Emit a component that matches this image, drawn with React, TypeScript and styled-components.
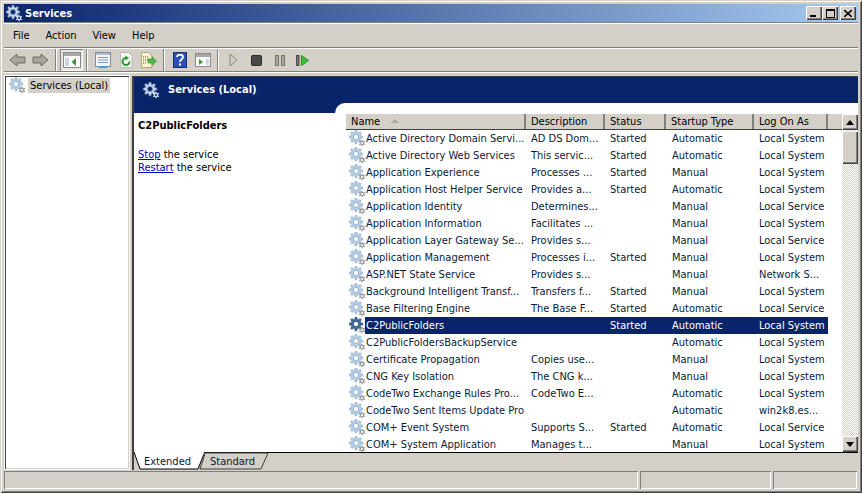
import React from "react";
import styled, { createGlobalStyle } from "styled-components";

const FONT_SIZE = "11px";

const Global = createGlobalStyle`
  html, body { margin: 0; padding: 0; background: #d4d0c8; overflow: hidden; }
  body { font-family: "DejaVu Sans Condensed", "DejaVu Sans", Arial, sans-serif; font-stretch: condensed; font-size: ${FONT_SIZE}; color: #000; }
  * { box-sizing: border-box; }
`;

const Frame = styled.div`
  width: 862px; height: 493px; padding: 4px; display: flex; flex-direction: column;
  background: #d4d0c8;
  box-shadow: inset 1px 1px 0 #d4d0c8, inset -1px -1px 0 #404040, inset 2px 2px 0 #fff, inset -2px -2px 0 #808080;
`;
const TitleBar = styled.div`
  height: 18px; display: flex; align-items: center; padding: 0 2px 0 2px; flex: none;
  background: linear-gradient(90deg, #0a246a, #a6caf0);
`;
const TitleText = styled.span`
  color: #fff; font-weight: 700; font-size: ${FONT_SIZE}; margin-left: 2px; flex: 1;
`;
const CaptionButton = styled.div<{ $gap?: boolean }>`
  width: 16px; height: 14px; background: #d4d0c8; display: flex; align-items: center; justify-content: center;
  margin-left: ${p => (p.$gap ? "2px" : "0")};
  box-shadow: inset 1px 1px 0 #fff, inset -1px -1px 0 #404040, inset -2px -2px 0 #808080;
`;
const MenuBar = styled.div`
  margin-top: 1px; height: 25px; display: flex; align-items: center; gap: 16px; padding: 0 0 1px 9px; flex: none;
  border-top: 1px solid #fff; border-bottom: 1px solid #808080;
  box-shadow: 0 -1px 0 #808080;
`;
const MenuItem = styled.span` color: #000; `;
const ToolBar = styled.div`
  height: 24px; display: flex; align-items: center; padding-left: 2px; flex: none;
  border-top: 1px solid #fff; border-bottom: 1px solid #808080;
`;
const ToolButton = styled.div<{ $active?: boolean }>`
  width: 23px; height: 22px; display: flex; align-items: center; justify-content: center; flex: none;
  ${p => p.$active ? `
    background: repeating-conic-gradient(#d4d0c8 0 25%, #fff 0 50%) 0 0/2px 2px;
    box-shadow: inset 1px 1px 0 #808080, inset -1px -1px 0 #fff;
  ` : ""}
`;
const ToolSep = styled.div`
  width: 8px; height: 22px; flex: none;
  display: flex; justify-content: center;
  &::after { content: ""; width: 2px; height: 100%; background: linear-gradient(90deg, #808080 50%, #fff 50%); }
`;
const Content = styled.div`
  flex: 1; min-height: 0; display: flex; gap: 3px; padding-top: 3px;
  border-top: 1px solid #fff; margin-bottom: 1px;
`;
const TreePane = styled.div`
  width: 124px; background: #fff; padding: 1px;
  box-shadow: inset 1px 1px 0 #404040, inset -1px -1px 0 #d4d0c8, 0 0 0 1px #fff;
  margin: 0 0 1px 1px;
`;
const TreeRow = styled.div` display: flex; align-items: center; height: 17px; padding-left: 3px; `;
const TreeLabel = styled.span`
  margin-left: 2px; background: #d4d0c8; padding: 0 2px; height: 15px; line-height: 15px; color: #000;
`;
const MainPane = styled.div`
  flex: 1; min-width: 0; display: flex; flex-direction: column; background: #fff;
  border-top: 1px solid #404040; border-left: 2px solid #404040;
`;
const BlueHeader = styled.div`
  height: 26px; flex: none; background: #0a246a; display: flex; align-items: center; padding-left: 9px;
`;
const BlueTitle = styled.span`
  color: #fff; font-weight: 700; margin-left: 8px; margin-top: -2px;
`;
const Body = styled.div` flex: 1; min-height: 0; display: flex; background: #0a246a; `;
const DescPane = styled.div`
  width: 201px; margin-top: 10px; background: #fff; padding: 5px 0 0 4px; flex: none;
  display: flex; flex-direction: column;
`;
const DescTitle = styled.div` font-weight: 700; line-height: 15px; margin-bottom: 15px; `;
const DescLine = styled.div` line-height: 13px; `;
const DescLink = styled.span` color: #0000c8; text-decoration: underline; `;
const ListPane = styled.div`
  flex: 1; min-width: 0; background: #fff; border-top-left-radius: 10px;
  display: flex; flex-direction: column; padding: 11px 0 0 11px;
`;
const ListArea = styled.div` flex: 1; min-height: 0; display: flex; `;
const Table = styled.div` flex: 1; min-width: 0; display: flex; flex-direction: column; overflow: hidden; `;
const cols = "180px 79px 61px 88px 74px";
const HeaderRow = styled.div`
  display: grid; grid-template-columns: ${cols} 1fr; height: 16px; flex: none; background: #d4d0c8;
  border-bottom: 1px solid #404040;
`;
const HeaderCell = styled.div`
  padding-left: 5px; line-height: 15px; border-right: 2px solid #808080; white-space: nowrap;
  display: flex; align-items: center; gap: 11px;
`;
const HeaderFill = styled.div``;
const SortMark = styled.span`
  width: 0; height: 0; border-left: 4px solid transparent; border-right: 4px solid transparent;
  border-bottom: 4px solid #aca899; margin-top: -2px;
`;
const Rows = styled.div` flex: 1; overflow: hidden; `;
const Row = styled.div`
  display: grid; grid-template-columns: ${cols}; width: 482px; height: 17px; align-items: center; color: #0a1a3a;
`;
const NameCell = styled.div`
  display: flex; align-items: center; padding-left: 3px; white-space: nowrap; height: 17px;
`;
const NameText = styled.span` margin-left: 0; padding-left: 0; `;
const Cell = styled.div<{ $indent: number }>`
  padding-left: ${p => p.$indent}px; white-space: nowrap; line-height: 17px; height: 17px;
`;
const SelectedRow = styled(Row)`
  color: #fff;
  background: linear-gradient(90deg, #fff 19px, #0a246a 19px);
`;
const ScrollBar = styled.div`
  width: 16px; flex: none; display: flex; flex-direction: column;
  background: repeating-conic-gradient(#d4d0c8 0 25%, #fff 0 50%) 0 0/2px 2px;
`;
const ScrollBtn = styled.div`
  width: 16px; height: 16px; flex: none; background: #d4d0c8; display: flex; align-items: center; justify-content: center;
  box-shadow: inset 1px 1px 0 #fff, inset -1px -1px 0 #404040, inset -2px -2px 0 #808080;
`;
const ScrollThumb = styled(ScrollBtn)` height: 33px; margin-top: 1px; `;
const ScrollTrack = styled.div` flex: 1; `;
const TabStrip = styled.div`
  height: 18px; flex: none; background: #d4d0c8;
  position: relative; border-top: 1px solid #000;
`;
const TabsSvg = styled.svg` position: absolute; left: 0; top: -1px; `;
const TabLabel = styled.span<{ $left: number }>`
  position: absolute; left: ${p => p.$left}px; top: 1px; color: #0a1a3a; line-height: 15px;
`;
const StatusBar = styled.div`
  height: 18px; flex: none; display: flex; gap: 2px; padding: 0 1px 0 0;
`;
const StatusCell = styled.div<{ $w?: number }>`
  ${p => (p.$w ? `width: ${p.$w}px; flex: none;` : "flex: 1;")}
  height: 18px;
  box-shadow: inset 1px 1px 0 #808080, inset -1px -1px 0 #fff;
`;

function gearPath(cx: number, cy: number, ro: number, ri: number, teeth: number) {
  const pts: string[] = [];
  const step = (Math.PI * 2) / teeth;
  for (let i = 0; i < teeth; i++) {
    const a = i * step - Math.PI / 2;
    const seq: [number, number][] = [
      [a - step * 0.3, ri], [a - step * 0.17, ro], [a + step * 0.17, ro], [a + step * 0.3, ri],
    ];
    for (const [an, r] of seq) pts.push(`${(cx + Math.cos(an) * r).toFixed(2)} ${(cy + Math.sin(an) * r).toFixed(2)}`);
  }
  return "M" + pts.join("L") + "Z";
}

const Gear: React.FC<{ tone?: "pale" | "dark" | "white" }> = ({ tone = "pale" }) => {
  const main = tone === "pale" ? "#b4cde3" : tone === "dark" ? "#3f6a98" : "#c6d6ea";
  const edge = tone === "pale" ? "#8aa8c6" : tone === "dark" ? "#2b4a78" : "#7f9dc0";
  const hub = tone === "white" ? "#0a246a" : "#fff";
  const small = tone === "white" ? "#c6d6ea" : "#a0a0a0";
  return (
    <svg width="17" height="17" viewBox="0 0 17 17" style={{ flex: "none" }}>
      <path d={gearPath(7, 7, 6.8, 5, 8)} fill={main} stroke={edge} strokeWidth="0.6" />
      <circle cx="7" cy="7" r="2.6" fill={hub} stroke={edge} strokeWidth="0.8" />
      <path d={gearPath(13, 13, 3.4, 2.3, 6)} fill={small} />
      <circle cx="13" cy="13" r="1" fill={hub} />
    </svg>
  );
};

const Arrow: React.FC<{ dir: "l" | "r" }> = ({ dir }) => (
  <svg width="17" height="14" viewBox="0 0 17 14">
    <path
      d={dir === "l" ? "M1 7 L8 1 V4 H16 V10 H8 V13 Z" : "M16 7 L9 1 V4 H1 V10 H9 V13 Z"}
      fill="#a8a59d" stroke="#6e6c66" strokeWidth="1"
    />
  </svg>
);

const IconTree = () => (
  <svg width="18" height="16" viewBox="0 0 18 16">
    <rect x="0.5" y="0.5" width="17" height="15" fill="#fff" stroke="#8a8a8a" />
    <rect x="1" y="1" width="16" height="3" fill="#a8a8a8" />
    <rect x="2" y="6" width="4" height="8" fill="#c9d5e2" />
    <path d="M13 6 L8.5 10 L13 14 Z" fill="#2f9a3a" />
  </svg>
);
const IconProps = () => (
  <svg width="16" height="16" viewBox="0 0 16 16">
    <rect x="0.5" y="0.5" width="15" height="14" fill="#f4f6fa" stroke="#7f8ea3" />
    <rect x="1" y="1" width="14" height="2" fill="#b4bdcc" />
    <path d="M3 5.5H13M3 8H13M3 10.5H13" stroke="#7f96b4" />
    <rect x="4" y="14" width="8" height="2" fill="#3ea0e0" />
  </svg>
);
const IconRefresh = () => (
  <svg width="14" height="16" viewBox="0 0 14 16">
    <path d="M1.5 .5H9.5L13 4V15.5H1.5Z" fill="#f7f7ef" stroke="#bbb" />
    <path d="M10.5 9.5A3.5 3.5 0 1 1 7 6" fill="none" stroke="#2f9a3a" strokeWidth="2" />
    <path d="M6.5 3.5 L10 6 L6.5 8.5Z" fill="#2f9a3a" />
  </svg>
);
const IconExport = () => (
  <svg width="17" height="16" viewBox="0 0 17 16">
    <path d="M1.5 .5H8.5L12 4V15.5H1.5Z" fill="#fbf3cf" stroke="#b8aa76" />
    <path d="M3 5H8M3 8H8M3 11H7" stroke="#444" strokeDasharray="1 1" />
    <path d="M8 7H12V4.5L16.5 9 12 13.5V11H8Z" fill="#50b548" stroke="#2d8a2c" strokeWidth=".6" />
  </svg>
);
const IconHelp = () => (
  <svg width="14" height="16" viewBox="0 0 14 16">
    <rect x=".5" y=".5" width="13" height="15" fill="#2c4fb8" stroke="#1a2c78" />
    <path d="M4 5 C4 2 10 2 10 5 C10 7.4 7 7 7 10" fill="none" stroke="#fff" strokeWidth="1.8" />
    <rect x="6" y="11.5" width="2" height="2" fill="#fff" />
  </svg>
);
const IconAction = () => (
  <svg width="16" height="14" viewBox="0 0 16 14">
    <rect x=".5" y=".5" width="15" height="13" fill="#fff" stroke="#8a8a8a" />
    <rect x="1" y="1" width="14" height="3" fill="#a8a8a8" />
    <path d="M4 6 L8 9 L4 12 Z" fill="#2f9a3a" />
    <rect x="11" y="6" width="3" height="6" fill="#c9d5e2" />
  </svg>
);
const IconPlay = () => (
  <svg width="9" height="14" viewBox="0 0 9 14">
    <path d="M1 1 L8 7 L1 13 Z" fill="#cfccc4" stroke="#8a8a84" />
  </svg>
);
const IconStop = () => (
  <svg width="11" height="11" viewBox="0 0 11 11">
    <rect x=".5" y=".5" width="10" height="10" rx="1" fill="#4a4a4a" stroke="#2a2a2a" />
  </svg>
);
const IconPause = () => (
  <svg width="10" height="11" viewBox="0 0 10 11">
    <rect x=".5" y=".5" width="3" height="10" fill="#a8a8a2" stroke="#77776f" />
    <rect x="6.5" y=".5" width="3" height="10" fill="#a8a8a2" stroke="#77776f" />
  </svg>
);
const IconResume = () => (
  <svg width="13" height="11" viewBox="0 0 13 11">
    <rect x=".5" y=".5" width="2.5" height="10" fill="#77776f" stroke="#4f4f49" />
    <path d="M5.5 .5 L12.5 5.5 L5.5 10.5 Z" fill="#3dc23d" stroke="#1f8f1f" />
  </svg>
);

type Svc = [string, string, string, string, string];
const services: Svc[] = [
  ["Active Directory Domain Servi...", "AD DS Dom...", "Started", "Automatic", "Local System"],
  ["Active Directory Web Services", "This servic...", "Started", "Automatic", "Local System"],
  ["Application Experience", "Processes ...", "Started", "Manual", "Local System"],
  ["Application Host Helper Service", "Provides a...", "Started", "Automatic", "Local System"],
  ["Application Identity", "Determines...", "", "Manual", "Local Service"],
  ["Application Information", "Facilitates ...", "", "Manual", "Local System"],
  ["Application Layer Gateway Se...", "Provides s...", "", "Manual", "Local Service"],
  ["Application Management", "Processes i...", "Started", "Manual", "Local System"],
  ["ASP.NET State Service", "Provides s...", "", "Manual", "Network S..."],
  ["Background Intelligent Transf...", "Transfers f...", "Started", "Manual", "Local System"],
  ["Base Filtering Engine", "The Base F...", "Started", "Automatic", "Local Service"],
  ["C2PublicFolders", "", "Started", "Automatic", "Local System"],
  ["C2PublicFoldersBackupService", "", "", "Automatic", "Local System"],
  ["Certificate Propagation", "Copies use...", "", "Manual", "Local System"],
  ["CNG Key Isolation", "The CNG k...", "", "Manual", "Local System"],
  ["CodeTwo Exchange Rules Pro...", "CodeTwo E...", "", "Automatic", "Local System"],
  ["CodeTwo Sent Items Update Pro", "", "", "Automatic", "win2k8.es..."],
  ["COM+ Event System", "Supports S...", "Started", "Automatic", "Local Service"],
  ["COM+ System Application", "Manages t...", "", "Manual", "Local System"],
];

const Tri: React.FC<{ up?: boolean }> = ({ up }) => (
  <svg width="8" height="5" viewBox="0 0 8 5">
    <path d={up ? "M4 0 L8 5 H0 Z" : "M0 0 H8 L4 5 Z"} fill="#000" />
  </svg>
);

export default function App() {
  return (
    <>
      <Global />
      <Frame>
        <TitleBar>
          <Gear tone="white" />
          <TitleText>Services</TitleText>
          <CaptionButton>
            <svg width="8" height="8" viewBox="0 0 8 8"><rect x="0" y="6" width="6" height="2" fill="#000" /></svg>
          </CaptionButton>
          <CaptionButton>
            <svg width="9" height="9" viewBox="0 0 9 9"><path d="M.5 1.5H8.5V8.5H.5Z" fill="none" stroke="#000" /><rect y="0" width="9" height="2" fill="#000" /></svg>
          </CaptionButton>
          <CaptionButton $gap>
            <svg width="8" height="7" viewBox="0 0 8 7"><path d="M0 0L8 7M8 0L0 7" stroke="#000" strokeWidth="1.6" /></svg>
          </CaptionButton>
        </TitleBar>
        <MenuBar>
          <MenuItem>File</MenuItem>
          <MenuItem>Action</MenuItem>
          <MenuItem>View</MenuItem>
          <MenuItem>Help</MenuItem>
        </MenuBar>
        <ToolBar>
          <ToolButton><Arrow dir="l" /></ToolButton>
          <ToolButton><Arrow dir="r" /></ToolButton>
          <ToolSep />
          <ToolButton $active><IconTree /></ToolButton>
          <ToolSep />
          <ToolButton><IconProps /></ToolButton>
          <ToolButton><IconRefresh /></ToolButton>
          <ToolButton><IconExport /></ToolButton>
          <ToolSep />
          <ToolButton><IconHelp /></ToolButton>
          <ToolButton><IconAction /></ToolButton>
          <ToolSep />
          <ToolButton><IconPlay /></ToolButton>
          <ToolButton><IconStop /></ToolButton>
          <ToolButton><IconPause /></ToolButton>
          <ToolButton><IconResume /></ToolButton>
        </ToolBar>
        <Content>
          <TreePane>
            <TreeRow>
              <Gear />
              <TreeLabel>Services (Local)</TreeLabel>
            </TreeRow>
          </TreePane>
          <MainPane>
            <BlueHeader>
              <Gear tone="white" />
              <BlueTitle>Services (Local)</BlueTitle>
            </BlueHeader>
            <Body>
              <DescPane>
                <DescTitle>C2PublicFolders</DescTitle>
                <DescLine><DescLink>Stop</DescLink> the service</DescLine>
                <DescLine><DescLink>Restart</DescLink> the service</DescLine>
              </DescPane>
              <ListPane>
                <ListArea>
                  <Table>
                    <HeaderRow>
                      <HeaderCell>Name <SortMark /></HeaderCell>
                      <HeaderCell>Description</HeaderCell>
                      <HeaderCell>Status</HeaderCell>
                      <HeaderCell>Startup Type</HeaderCell>
                      <HeaderCell>Log On As</HeaderCell>
                      <HeaderFill />
                    </HeaderRow>
                    <Rows>
                      {services.map(s => {
                        const sel = s[0] === "C2PublicFolders";
                        const R = sel ? SelectedRow : Row;
                        return (
                          <R key={s[0]}>
                            <NameCell>
                              <Gear tone={sel ? "dark" : "pale"} />
                              <NameText>{s[0]}</NameText>
                            </NameCell>
                            <Cell $indent={5}>{s[1]}</Cell>
                            <Cell $indent={5}>{s[2]}</Cell>
                            <Cell $indent={6}>{s[3]}</Cell>
                            <Cell $indent={5}>{s[4]}</Cell>
                          </R>
                        );
                      })}
                    </Rows>
                  </Table>
                  <ScrollBar>
                    <ScrollBtn><Tri up /></ScrollBtn>
                    <ScrollThumb />
                    <ScrollTrack />
                    <ScrollBtn><Tri /></ScrollBtn>
                  </ScrollBar>
                </ListArea>
              </ListPane>
            </Body>
            <TabStrip>
              <TabsSvg width="140" height="19" viewBox="0 0 140 19">
                <path d="M0 0 L6 17 H64 L70 0 Z" fill="#fff" />
                <path d="M0 0 L6 17 H64 L70 2" fill="none" stroke="#000" />
                <path d="M66 17 L70 5 L71 1 H134 L127 17 Z" fill="#d4d0c8" stroke="#404040" />
              </TabsSvg>
              <TabLabel $left={10}>Extended</TabLabel>
              <TabLabel $left={76}>Standard</TabLabel>
            </TabStrip>
          </MainPane>
        </Content>
        <StatusBar>
          <StatusCell />
          <StatusCell $w={131} />
          <StatusCell $w={84} />
        </StatusBar>
      </Frame>
    </>
  );
}
